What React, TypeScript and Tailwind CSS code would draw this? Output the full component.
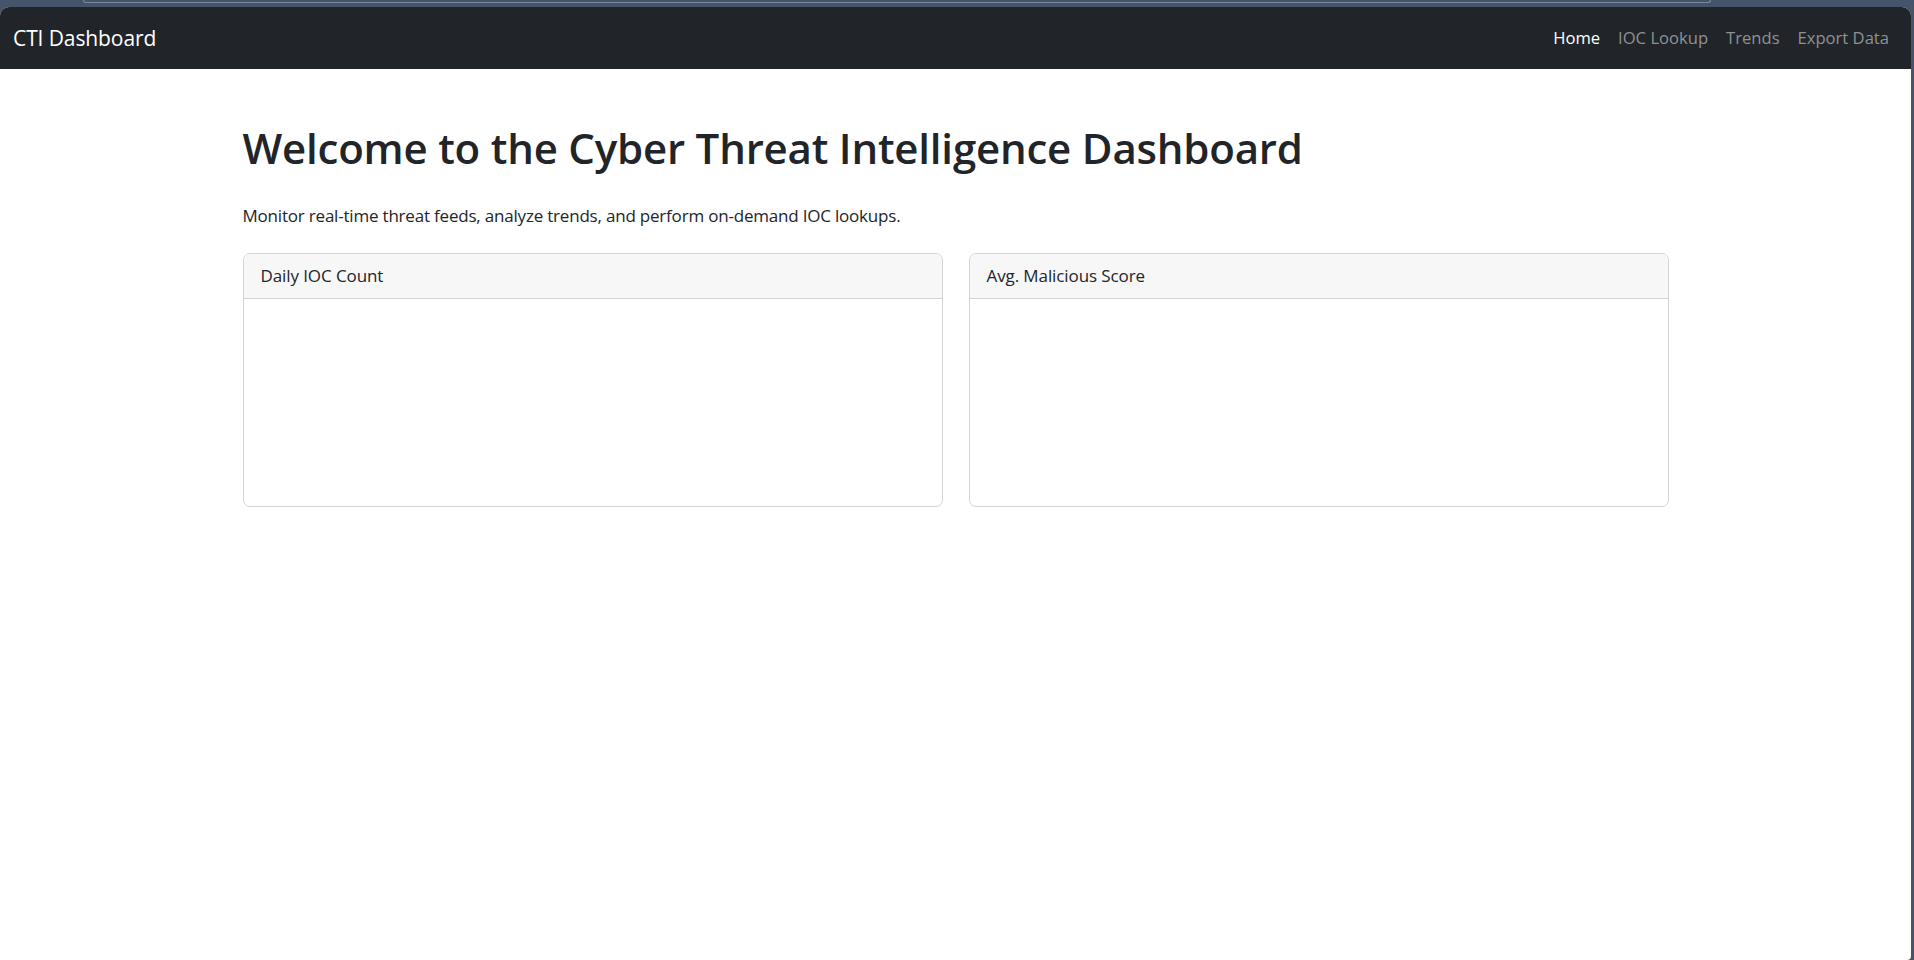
import React from 'react';

const FONT = "font-['Open_Sans','Noto_Sans',sans-serif]";

const navLinks = [
  { label: 'Home', active: true },
  { label: 'IOC Lookup', active: false },
  { label: 'Trends', active: false },
  { label: 'Export Data', active: false },
];

const ChartCard: React.FC<{ title: string }> = ({ title }) => (
  <div className="flex-1 rounded-[7px] border border-[#d3d4d5] bg-white overflow-hidden">
    <div className="h-[45px] bg-[#f7f7f7] border-b border-[#d3d4d5] px-[17px] flex items-center text-[17px] tracking-[-0.1px] text-[#212529]">
      {title}
    </div>
    <div className="h-[207px]" />
  </div>
);

const App: React.FC = () => {
  return (
    <div className={`h-[960px] w-full overflow-hidden bg-[#45546b] flex flex-col pr-[3px] ${FONT}`}>
      <div className="h-[7px] shrink-0">
        <div className="ml-[83px] w-[1628px] h-[3px] border border-t-0 border-[#7b889c] rounded-b-[6px]" />
      </div>

      <div className="flex-1 bg-white rounded-t-[9px] rounded-br-[4px] overflow-hidden">
        <nav className="h-[62px] bg-[#212529] flex items-center justify-between pl-[13px] pr-[13px]">
          <span className="text-[21px] tracking-[-0.1px] text-white leading-none">CTI Dashboard</span>
          <div className="flex items-center">
            {navLinks.map(link => (
              <a
                key={link.label}
                className={`px-[9px] text-[16.6px] ${link.active ? 'text-white' : 'text-[#8f9193]'}`}
              >
                {link.label}
              </a>
            ))}
          </div>
        </nav>

        <main className="w-[1426px] mx-auto pt-[54px]">
          <h1 className="text-[42px] leading-[1.2] font-semibold tracking-[-0.2px] text-[#212529] mb-[30px]">
            Welcome to the Cyber Threat Intelligence Dashboard
          </h1>
          <p className="text-[17px] leading-[1.5] tracking-[-0.2px] text-[#212529] mb-[24px]">
            Monitor real-time threat feeds, analyze trends, and perform on-demand IOC lookups.
          </p>
          <div className="flex gap-[26px]">
            <ChartCard title="Daily IOC Count" />
            <ChartCard title="Avg. Malicious Score" />
          </div>
        </main>
      </div>
    </div>
  );
};

export default App;
